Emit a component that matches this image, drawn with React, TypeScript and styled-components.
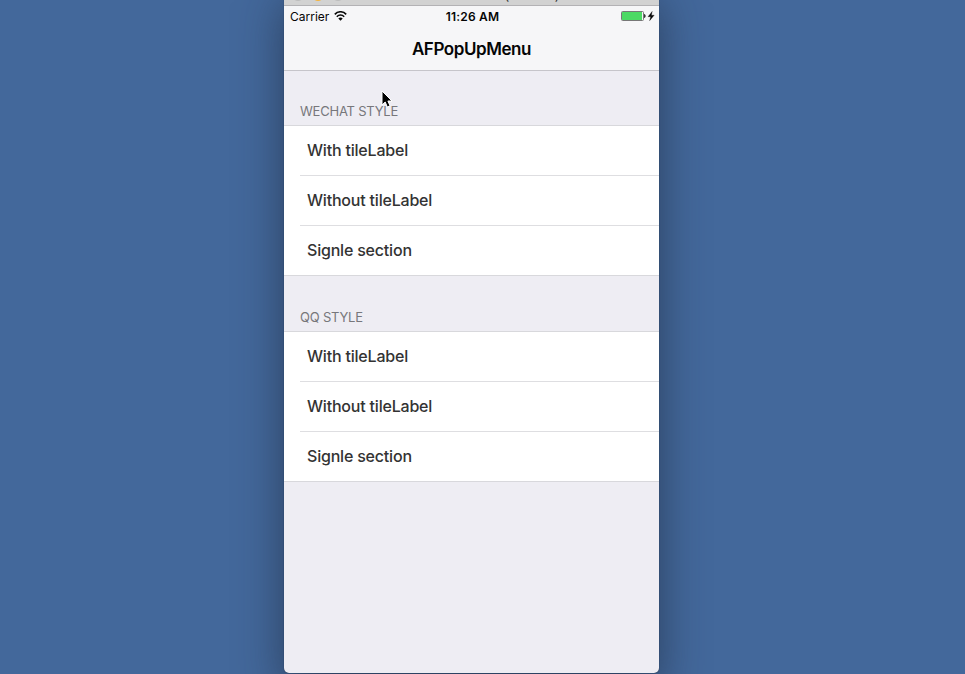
import React from "react";
import styled, { createGlobalStyle } from "styled-components";

const GlobalStyle = createGlobalStyle`
  * { box-sizing: border-box; }
  body { margin: 0; overflow: hidden; background: #43689b; font-family: Inter, "Liberation Sans", sans-serif; }
`;

const Desktop = styled.main`
  display: flex;
  width: 965px;
  height: 674px;
  padding-left: 284px;
  background: #43689b;
  overflow: hidden;
`;

const Simulator = styled.section`
  display: flex;
  flex-direction: column;
  position: relative;
  flex: none;
  width: 375px;
  height: 689px;
  margin-top: -16px;
  background: #eeedf3;
  border-radius: 5px;
  box-shadow: 0 0 1px rgba(0, 0, 0, 0.65), 0 18px 46px rgba(30, 42, 60, 0.65);
`;

const TitleBar = styled.header`
  display: flex;
  justify-content: center;
  position: relative;
  flex: none;
  height: 22px;
  padding-right: 3px;
  background: #d2d2d2;
  border-bottom: 1px solid #b3b2b5;
  border-radius: 5px 5px 0 0;
`;

const Lights = styled.div`
  position: absolute;
  left: 8px;
  top: 5px;
  display: flex;
  gap: 8px;
`;

const Light = styled.i<{ $color: string }>`
  width: 12px;
  height: 12px;
  border-radius: 50%;
  background: ${(p) => p.$color};
`;

const WindowTitle = styled.span`
  font-size: 13px;
  line-height: 23px;
  letter-spacing: -0.2px;
  color: #333;
  white-space: nowrap;
`;

const NavArea = styled.div`
  flex: none;
  height: 65px;
  background: #f6f6f8;
  border-bottom: 1px solid #c6c5ca;
`;

const StatusBar = styled.div`
  display: grid;
  grid-template-columns: 1fr auto 1fr;
  align-items: center;
  height: 20px;
  padding: 0 4px 0 6px;
  font-size: 12px;
  color: #050505;
`;

const Carrier = styled.div`
  display: flex;
  align-items: center;
  gap: 5px;
`;

const Clock = styled.time`
  font-weight: 600;
  letter-spacing: 0.2px;
`;

const Power = styled.div`
  display: flex;
  justify-content: flex-end;
`;

const NavTitle = styled.h1`
  margin: 0;
  padding-top: 11px;
  text-align: center;
  font-size: 17px;
  line-height: 24px;
  font-weight: 600;
  letter-spacing: -0.42px;
  color: #050505;
`;

const GroupHeader = styled.h2<{ $height: number }>`
  display: flex;
  align-items: flex-end;
  height: ${(p) => p.$height}px;
  margin: 0;
  padding: 0 16px 6px;
  font-size: 13px;
  line-height: 16px;
  font-weight: 400;
  letter-spacing: -0.22px;
  color: #77777b;
`;

const Rows = styled.ul`
  margin: 0;
  padding: 0 0 0 16px;
  list-style: none;
  background: #fff;
  border-top: 1px solid #d8d8dc;
  border-bottom: 1px solid #d8d8dc;
`;

const Row = styled.li`
  height: 50px;
  padding-left: 7px;
  line-height: 48px;
  font-size: 16px;
  font-weight: 500;
  letter-spacing: -0.2px;
  color: #333;
  border-bottom: 1px solid #dedee1;
  &:last-child { height: 49px; border-bottom: 0; }
`;

const Pointer = styled.svg`
  position: absolute;
  left: 97px;
  top: 106px;
`;

const Wifi = () => (
  <svg width="13" height="10" viewBox="0 0 13 10" fill="none" stroke="#080808" strokeWidth="1.6">
    <path d="M.8 3.4C4-.1 9-.1 12.2 3.4M2.8 5.7c2.1-2.2 5.3-2.2 7.4 0" />
    <path d="M4.3 7.4C5.5 6.2 7.5 6.2 8.7 7.4L6.5 9.7Z" fill="#080808" stroke="none" />
  </svg>
);

const Battery = () => (
  <svg width="34" height="10" viewBox="0 0 34 10">
    <rect x=".5" y=".5" width="22" height="9" rx="1" fill="#f6f6f8" stroke="#777" />
    <rect x="1" y="1" width="20" height="8" fill="#4cd964" />
    <path d="M23.2 3c1.8.3 1.8 3.7 0 4Z" fill="#080808" />
    <path d="M31.2.4 27 5.7H29.7L28.6 9.7 33.2 4.2H30.4Z" fill="#080808" stroke="#080808" strokeWidth=".3" />
  </svg>
);

const groups = [
  { title: "WECHAT STYLE", headerHeight: 54 },
  { title: "QQ STYLE", headerHeight: 55 },
];
const items = ["With tileLabel", "Without tileLabel", "Signle section"];

export default function App() {
  return (
    <>
      <GlobalStyle />
      <Desktop>
        <Simulator>
          <TitleBar>
            <Lights>
              <Light $color="#bcbcbc" />
              <Light $color="#f6b43c" />
              <Light $color="#bcbcbc" />
            </Lights>
            <WindowTitle>iPhone 6s – iOS 10.0 (14A345)</WindowTitle>
          </TitleBar>
          <NavArea>
            <StatusBar>
              <Carrier>Carrier <Wifi /></Carrier>
              <Clock>11:26 AM</Clock>
              <Power><Battery /></Power>
            </StatusBar>
            <NavTitle>AFPopUpMenu</NavTitle>
          </NavArea>
          {groups.map((group) => (
            <section key={group.title}>
              <GroupHeader $height={group.headerHeight}>{group.title}</GroupHeader>
              <Rows>{items.map((item) => <Row key={item}>{item}</Row>)}</Rows>
            </section>
          ))}
          <Pointer width="14" height="19" viewBox="0 0 14 19">
            <path d="M1 1V15L4.2 12 6.3 17 9 15.8 6.9 11H11Z" fill="#000" stroke="#fff" />
          </Pointer>
        </Simulator>
      </Desktop>
    </>
  );
}
